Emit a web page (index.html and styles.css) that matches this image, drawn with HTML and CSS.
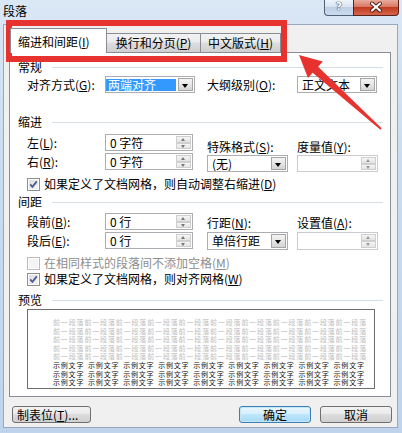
FILE: index.html
```html
<!DOCTYPE html>
<html lang="zh-CN">
<head>
    <meta charset="UTF-8">
    <meta name="viewport" content="width=device-width, initial-scale=1.0">
    <title>段落</title>
    <link rel="stylesheet" href="styles.css">
</head>
<body>
<div class="window">
    <div class="titlebar">
        <span class="title">段落</span>
        <div class="caption">
            <span class="cap-btn cap-help">?</span>
            <span class="cap-btn cap-close">
                <svg width="44" height="15" viewBox="0 0 44 15">
                    <path d="M18 3.5 L26 10.5 M26 3.5 L18 10.5" stroke="#4a1a12" stroke-width="4" stroke-linecap="round"/>
                    <path d="M18 3.5 L26 10.5 M26 3.5 L18 10.5" stroke="#fff" stroke-width="2.2" stroke-linecap="round"/>
                </svg>
            </span>
        </div>
    </div>

    <div class="client">
        <div class="tabs">
            <div class="tab active">缩进和间距(<u>I</u>)</div>
            <div class="tab tab2">换行和分页(<u>P</u>)</div>
            <div class="tab tab3">中文版式(<u>H</u>)</div>
        </div>

        <div class="panel">
            <div class="group g-general">常规</div>
            <div class="row row-first">
                <span class="lbl">对齐方式(<u>G</u>):</span>
                <span class="select w90">
                    <span class="val"><span class="hl">两端对齐</span></span>
                    <span class="drop"></span>
                </span>
                <span class="lbl lbl-right">大纲级别(<u>O</u>):</span>
                <span class="select w80">
                    <span class="val val-pad">正文文本</span>
                    <span class="drop"></span>
                </span>
            </div>

            <div class="group g-indent">缩进</div>
            <div class="sec sec-indent">
                <div class="col-left">
                    <div class="row">
                        <span class="lbl">左(<u>L</u>):</span>
                        <span class="spin w88"><span class="val">0 字符</span><span class="spin-btns"><span class="up"></span><span class="dn"></span></span></span>
                    </div>
                    <div class="row row-gap">
                        <span class="lbl">右(<u>R</u>):</span>
                        <span class="spin w88"><span class="val">0 字符</span><span class="spin-btns"><span class="up"></span><span class="dn"></span></span></span>
                    </div>
                </div>
                <div class="col-right pad5">
                    <div class="sub w90c">
                        <div class="sub-lbl">特殊格式(<u>S</u>):</div>
                        <span class="select w81"><span class="val val-pad">(无)</span><span class="drop"></span></span>
                    </div>
                    <div class="sub">
                        <div class="sub-lbl">度量值(<u>Y</u>):</div>
                        <span class="spin w81 off"><span class="val"></span><span class="spin-btns"><span class="up"></span><span class="dn"></span></span></span>
                    </div>
                </div>
            </div>

            <div class="check c-auto">
                <span class="cb"><svg width="11" height="11" viewBox="0 0 11 11"><path d="M2.2 5.4 L4.4 7.8 L8.8 2.4" stroke="#4b5d8c" stroke-width="1.8" fill="none"/></svg></span>
                <span>如果定义了文档网格，则自动调整右缩进(<u>D</u>)</span>
            </div>

            <div class="group g-spacing">间距</div>
            <div class="sec sec-spacing">
                <div class="col-left">
                    <div class="row">
                        <span class="lbl">段前(<u>B</u>):</span>
                        <span class="spin w88"><span class="val">0 行</span><span class="spin-btns"><span class="up"></span><span class="dn"></span></span></span>
                    </div>
                    <div class="row row-gap">
                        <span class="lbl">段后(<u>E</u>):</span>
                        <span class="spin w88"><span class="val">0 行</span><span class="spin-btns"><span class="up"></span><span class="dn"></span></span></span>
                    </div>
                </div>
                <div class="col-right pad2">
                    <div class="sub w90c">
                        <div class="sub-lbl">行距(<u>N</u>):</div>
                        <span class="select w81 h18"><span class="val val-pad">单倍行距</span><span class="drop"></span></span>
                    </div>
                    <div class="sub">
                        <div class="sub-lbl">设置值(<u>A</u>):</div>
                        <span class="spin w81 h18 off"><span class="val"></span><span class="spin-btns"><span class="up"></span><span class="dn"></span></span></span>
                    </div>
                </div>
            </div>

            <div class="check c-off disabled">
                <span class="cb"></span>
                <span>在相同样式的段落间不添加空格(<u>M</u>)</span>
            </div>
            <div class="check c-grid">
                <span class="cb"><svg width="11" height="11" viewBox="0 0 11 11"><path d="M2.2 5.4 L4.4 7.8 L8.8 2.4" stroke="#4b5d8c" stroke-width="1.8" fill="none"/></svg></span>
                <span>如果定义了文档网格，则对齐网格(<u>W</u>)</span>
            </div>

            <div class="group g-preview">预览</div>
            <div class="preview">
                <div class="pv-prev">前一段落前一段落前一段落前一段落前一段落前一段落前一段落前一段落前一段落前一段落</div>
                <div class="pv-prev">前一段落前一段落前一段落前一段落前一段落前一段落前一段落前一段落前一段落前一段落</div>
                <div class="pv-prev">前一段落前一段落前一段落前一段落前一段落前一段落前一段落前一段落前一段落前一段落</div>
                <div class="pv-prev">前一段落前一段落前一段落前一段落前一段落前一段落前一段落前一段落前一段落前一段落</div>
                <div class="pv-prev">前一段落前一段落前一段落前一段落前一段落前一段落前一段落前一段落前一段落前一段落</div>
                <div class="pv-text">示例文字 示例文字 示例文字 示例文字 示例文字 示例文字 示例文字 示例文字 示例文字</div>
                <div class="pv-text">示例文字 示例文字 示例文字 示例文字 示例文字 示例文字 示例文字 示例文字 示例文字</div>
                <div class="pv-text">示例文字 示例文字 示例文字 示例文字 示例文字 示例文字 示例文字 示例文字 示例文字</div>
            </div>
        </div>

        <div class="footer">
            <span class="btn btn-tabs">制表位(<u>T</u>)...</span>
            <div class="btn-group">
                <span class="btn btn-default">确定</span>
                <span class="btn">取消</span>
            </div>
        </div>
    </div>

    <!-- annotation overlay -->
    <div class="redbox"></div>
    <svg class="arrow" width="402" height="433" viewBox="0 0 402 433">
        <polygon points="299,55 322.8,61.6 318.1,66.8 381.6,128.3 380.4,129.7 312.7,72.8 308,78" fill="#e7332f"/>
    </svg>
</div>
</body>
</html>
```

FILE: styles.css
```css
body {
    margin: 0;
}

.window {
    position: relative;
    width: 402px;
    height: 433px;
    box-sizing: border-box;
    padding: 0 4px 5px 3px;
    display: flex;
    flex-direction: column;
    background: linear-gradient(to bottom, #dae7f5 0%, #c9dbef 40%, #bfd4ec 100%);
    font-family: "Noto Sans CJK SC", sans-serif;
    font-size: 12px;
    color: #000;
}

u {
    text-decoration: underline;
    text-underline-offset: 1px;
}

/* title bar */
.titlebar {
    height: 24px;
    display: flex;
    justify-content: space-between;
    align-items: flex-start;
}
.title {
    margin-top: 3px;
    line-height: 16px;
}
.caption {
    display: flex;
    margin-right: -1px;
}
.cap-btn {
    height: 16px;
    box-sizing: border-box;
    border: 1px solid #506079;
    border-top: none;
}
.cap-help {
    width: 29px;
    border-right: none;
    border-radius: 0 0 0 4px;
    background: linear-gradient(to bottom, #eef3fa 0%, #d9e4f1 45%, #bfd0e6 50%, #cbdaed 100%);
    text-align: center;
    line-height: 14px;
    font-family: "DejaVu Sans", sans-serif;
    font-weight: bold;
    font-size: 11px;
    color: #fff;
    text-shadow: 0 0 1px #3d4c63, 0 0 1px #3d4c63, 0 0 1px #3d4c63;
}
.cap-close {
    width: 46px;
    border-color: #5b2219;
    border-radius: 0 0 4px 0;
    background: linear-gradient(to bottom, #eaab9d 0%, #d97864 45%, #c23b22 50%, #d3654b 100%);
}
.cap-close svg {
    display: block;
}

/* client area */
.client {
    flex: 1;
    border: 1px solid #97a8bf;
    background: #f0f0f0;
    display: flex;
    flex-direction: column;
}

.tabs {
    display: flex;
    align-items: flex-end;
    height: 27px;
    padding-left: 6px;
    position: relative;
    z-index: 1;
}
.tab {
    height: 19px;
    box-sizing: border-box;
    border: 1px solid #898c95;
    border-bottom: none;
    margin-left: -1px;
    background: linear-gradient(to bottom, #f2f2f2 0%, #ebebeb 45%, #dddddd 50%, #cfcfcf 100%);
    line-height: 18px;
    text-align: center;
    white-space: nowrap;
}
.tab.active {
    width: 97px;
    height: 25px;
    margin-left: 0;
    margin-bottom: -1px;
    padding-top: 3px;
    line-height: 20px;
    background: #fff;
    position: relative;
    z-index: 2;
    text-align: left;
    padding-left: 7px;
}
.tab2 {
    width: 95px;
}
.tab3 {
    width: 81px;
}

.panel {
    margin-left: 5px;
    width: 382px;
    height: 345px;
    box-sizing: border-box;
    border: 1px solid #898c95;
    background: #fff;
    overflow: hidden;
}

.group {
    display: flex;
    align-items: center;
    height: 14px;
    line-height: 14px;
    padding-left: 8px;
    padding-right: 7px;
}
.group::after {
    content: "";
    flex: 1;
    height: 1px;
    margin-left: 10px;
    background: #d5dfe5;
}
.g-general { margin-top: 7px; }
.g-indent { margin-top: 22px; }
.g-spacing { margin-top: 4px; }
.g-preview { margin-top: 7px; }

.row {
    display: flex;
    align-items: center;
    height: 17px;
    padding-left: 17px;
}
.row-first {
    margin-top: 2px;
}
.row-gap {
    margin-top: 2px;
}
.lbl {
    width: 78px;
    flex: none;
    line-height: 17px;
    white-space: nowrap;
}
.lbl-right {
    margin-left: 12px;
    width: 90px;
}

.sec {
    display: flex;
}
.sec-indent { margin-top: 5px; }
.sec-spacing { margin-top: 4px; }
.col-right {
    display: flex;
    margin-left: 14px;
}
.pad5 { padding-top: 5px; }
.pad2 { padding-top: 2px; }
.sub-lbl {
    line-height: 16px;
    height: 16px;
    white-space: nowrap;
}
.pad2 .sub-lbl {
    margin-bottom: 1px;
}
.w90c {
    width: 90px;
}

/* combo box */
.select, .spin {
    display: flex;
    flex: none;
    height: 17px;
    box-sizing: border-box;
    border: 1px solid #abadb3;
    background: #fff;
}
.h18 { height: 18px; }
.w90 { width: 90px; }
.w88 { width: 88px; }
.w81 { width: 81px; }
.w80 { width: 80px; }
.val {
    flex: 1;
    line-height: 15px;
    white-space: nowrap;
    overflow: hidden;
}
.spin .val {
    padding-left: 4px;
}
.val-pad {
    padding-left: 4px;
}
.h18 .val { line-height: 16px; }
.hl {
    display: inline-block;
    width: 70px;
    height: 12px;
    margin-top: 1px;
    padding-left: 2px;
    box-sizing: border-box;
    line-height: 12px;
    background: #3399ff;
    color: #fff;
}
.drop {
    position: relative;
    width: 15px;
    flex: none;
    margin: 1px;
    box-sizing: border-box;
    border: 1px solid #a5a5a5;
    background: linear-gradient(to bottom, #f4f4f4 0%, #e6e6e6 50%, #d4d4d4 100%);
}
.drop::after {
    content: "";
    position: absolute;
    left: 3px;
    top: 5px;
    border-left: 3.5px solid transparent;
    border-right: 3.5px solid transparent;
    border-top: 4px solid #000;
}

/* spinner */
.spin-btns {
    width: 15px;
    flex: none;
    margin: 1px;
    display: flex;
    flex-direction: column;
}
.spin-btns span {
    position: relative;
    flex: 1;
    box-sizing: border-box;
    border: 1px solid #cfcfcf;
    background: linear-gradient(to bottom, #f6f6f6, #e3e3e3);
}
.spin-btns span::after {
    content: "";
    position: absolute;
    left: 4px;
    border-left: 2.5px solid transparent;
    border-right: 2.5px solid transparent;
}
.spin-btns .up::after {
    top: 1px;
    border-bottom: 3px solid #777;
}
.spin-btns .dn::after {
    top: 1px;
    border-top: 3px solid #777;
}
.spin.off {
    border-color: #c9cbd0;
}
.spin.off .spin-btns .up::after { border-bottom-color: #9a9a9a; }
.spin.off .spin-btns .dn::after { border-top-color: #9a9a9a; }

/* check boxes */
.check {
    display: flex;
    align-items: center;
    height: 14px;
    line-height: 14px;
    padding-left: 17px;
    white-space: nowrap;
}
.c-auto { margin-top: 5px; }
.c-off { margin-top: 6px; }
.c-grid { margin-top: 2px; }
.cb {
    position: relative;
    width: 13px;
    height: 13px;
    flex: none;
    margin-right: 4px;
    box-sizing: border-box;
    border: 1px solid #8e8f8f;
    background: linear-gradient(135deg, #d9dce1 0%, #f6f6f6 100%);
    box-shadow: inset 0 0 0 1px #fff;
}
.cb svg {
    position: absolute;
    left: 0;
    top: 0;
}
.check.disabled {
    color: #8d8d8d;
}
.check.disabled .cb {
    border-color: #bcbcbc;
    background: #f4f4f4;
}

/* preview */
.preview {
    margin-top: 2px;
    margin-left: 17px;
    width: 348px;
    height: 80px;
    box-sizing: border-box;
    border: 1px solid #6e6e6e;
    padding: 8px 0 0 25px;
    overflow: hidden;
    font-size: 7px;
    line-height: 8.6px;
    white-space: nowrap;
}
.pv-prev {
    color: #bdbdbd;
    letter-spacing: 0.85px;
}
.pv-text {
    color: #111;
    letter-spacing: 0.8px;
    word-spacing: 1.5px;
}

/* buttons */
.footer {
    display: flex;
    justify-content: space-between;
    margin-top: 9px;
    padding: 0 5px 0 8px;
}
.btn-group {
    display: flex;
}
.btn {
    display: inline-block;
    width: 72px;
    height: 17px;
    box-sizing: border-box;
    border: 1px solid #707070;
    border-radius: 3px;
    background: linear-gradient(to bottom, #f2f2f2 0%, #ebebeb 45%, #dddddd 50%, #cfcfcf 100%);
    line-height: 15px;
    text-align: center;
    white-space: nowrap;
}
.btn-tabs {
    width: 79px;
    text-align: left;
    padding-left: 4px;
}
.btn-default {
    margin-right: 9px;
    border-color: #3c7fb1;
    background: linear-gradient(to bottom, #eaf6fd 0%, #d9f0fc 45%, #bee6fd 50%, #a7d9f5 100%);
    box-shadow: inset 0 0 0 1px #c5e6f7;
}

/* annotation overlay */
.redbox {
    position: absolute;
    left: 6px;
    top: 20px;
    width: 281px;
    height: 42px;
    box-sizing: border-box;
    border: 6px solid #e7332f;
    pointer-events: none;
}
.arrow {
    position: absolute;
    left: 0;
    top: 0;
    pointer-events: none;
}
```
